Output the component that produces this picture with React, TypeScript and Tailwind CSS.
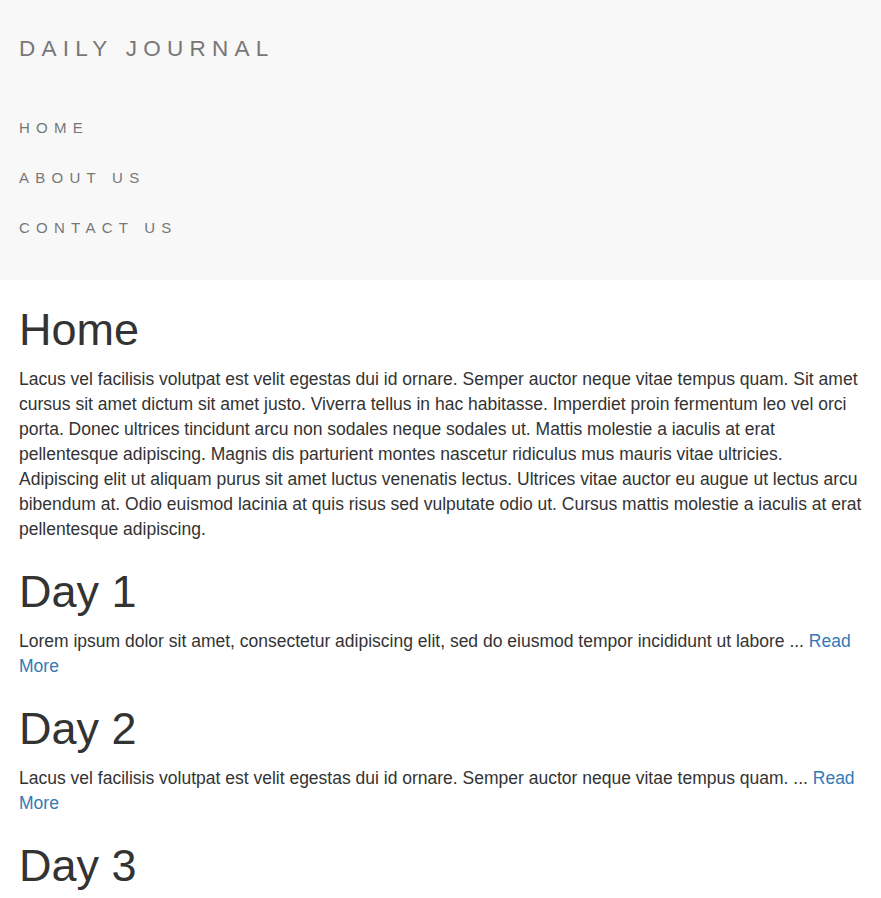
const posts = [
  {
    title: 'Day 1',
    body: 'Lorem ipsum dolor sit amet, consectetur adipiscing elit, sed do eiusmod tempor incididunt ut labore ...',
  },
  {
    title: 'Day 2',
    body: 'Lacus vel facilisis volutpat est velit egestas dui id ornare. Semper auctor neque vitae tempus quam. ...',
  },
  {
    title: 'Day 3',
    body: 'Pulvinar elementum integer enim neque volutpat ac tincidunt vitae semper. Quis enim lobortis scelerisque fermentum dui faucibus. ...',
  },
]

export default function App() {
  return (
    <div className="min-h-screen bg-white text-[#333] font-['Liberation_Sans',Arial,sans-serif] text-[17.5px] leading-[25px]">
      <nav className="bg-[#f8f8f8] px-[19px] pb-[28px]">
        <div className="h-[96px] flex items-center">
          <a className="text-[22.5px] tracking-[6.25px] text-[#777] uppercase">Daily Journal</a>
        </div>
        <ul className="mt-[6px]">
          <li className="h-[50px] flex items-center">
            <a className="text-[15px] tracking-[6.25px] text-[#777] uppercase">Home</a>
          </li>
          <li className="h-[50px] flex items-center">
            <a className="text-[15px] tracking-[6.25px] text-[#777] uppercase">About Us</a>
          </li>
          <li className="h-[50px] flex items-center">
            <a className="text-[15px] tracking-[6.25px] text-[#777] uppercase">Contact Us</a>
          </li>
        </ul>
      </nav>

      <main className="px-[19px]">
        <h1 className="mt-[25px] mb-[12.5px] text-[45px] leading-[49.5px]">Home</h1>
        <p>
          Lacus vel facilisis volutpat est velit egestas dui id ornare. Semper auctor neque vitae tempus quam. Sit amet
          cursus sit amet dictum sit amet justo. Viverra tellus in hac habitasse. Imperdiet proin fermentum leo vel orci
          porta. Donec ultrices tincidunt arcu non sodales neque sodales ut. Mattis molestie a iaculis at erat
          pellentesque adipiscing. Magnis dis parturient montes nascetur ridiculus mus mauris vitae ultricies.
          Adipiscing elit ut aliquam purus sit amet luctus venenatis lectus. Ultrices vitae auctor eu augue ut lectus arcu
          bibendum at. Odio euismod lacinia at quis risus sed vulputate odio ut. Cursus mattis molestie a iaculis at erat
          pellentesque adipiscing.
        </p>

        {posts.map((post) => (
          <div key={post.title}>
            <h1 className="mt-[25px] mb-[12.5px] text-[45px] leading-[49.5px]">{post.title}</h1>
            <p>
              {post.body} <a className="text-[#337ab7]">Read More</a>
            </p>
          </div>
        ))}
      </main>
    </div>
  )
}
